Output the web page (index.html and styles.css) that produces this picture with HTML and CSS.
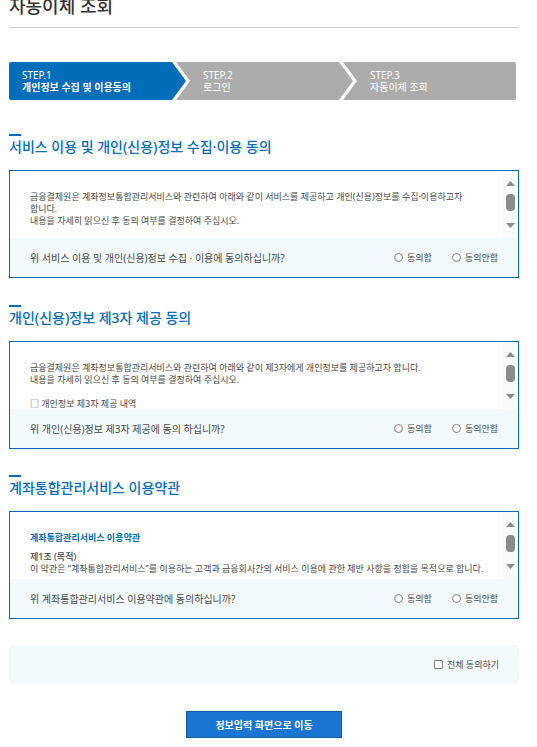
FILE: index.html
```html
<!DOCTYPE html>
<html lang="ko">
<head>
<meta charset="utf-8">
<meta name="viewport" content="width=device-width, initial-scale=1">
<title>자동이체 조회</title>
<link rel="stylesheet" href="styles.css">
</head>
<body>
<svg width="0" height="0" class="defs" aria-hidden="true">
  <symbol id="scrollbar" viewBox="0 0 15 67">
    <rect width="15" height="67" fill="#fbfbfb"/>
    <path d="M7.5 10 12 15H3z" fill="#8b8b8b"/>
    <rect x="3" y="23" width="9" height="17" rx="4" fill="#8b8b8b"/>
    <path d="M7.5 57 12 52H3z" fill="#8b8b8b"/>
  </symbol>
</svg>
<main class="page">
  <h1 class="title">자동이체 조회</h1>
  <ol class="steps">
    <li class="step step-first"><span>STEP.1</span><strong>개인정보 수집 및 이용동의</strong></li>
    <li class="step step-middle"><span>STEP.2</span><span>로그인</span></li>
    <li class="step step-last"><span>STEP.3</span><span>자동이체 조회</span></li>
  </ol>
  <form>
    <section class="section">
      <h2 class="heading">서비스 이용 및 개인(신용)정보 수집·이용 동의</h2>
      <div class="box">
        <div class="viewer">
          <div class="terms">
            <p>금융결제원은 계좌정보통합관리서비스와 관련하여 아래와 같이 서비스를 제공하고 개인(신용)정보를 수집·이용하고자<br>합니다.<br>내용을 자세히 읽으신 후 동의 여부를 결정하여 주십시오.</p>
          </div>
          <svg class="scrollbar" aria-hidden="true"><use href="#scrollbar"/></svg>
        </div>
        <div class="question">
          <p>위 서비스 이용 및 개인(신용)정보 수집 · 이용에 동의하십니까?</p>
          <div class="choices">
            <label class="choice"><input type="radio" name="service">동의함</label>
            <label class="choice"><input type="radio" name="service">동의안함</label>
          </div>
        </div>
      </div>
    </section>
    <section class="section">
      <h2 class="heading">개인(신용)정보 제3자 제공 동의</h2>
      <div class="box">
        <div class="viewer">
          <div class="terms">
            <p>금융결제원은 계좌정보통합관리서비스와 관련하여 아래와 같이 제3자에게 개인정보를 제공하고자 합니다.<br>내용을 자세히 읽으신 후 동의 여부를 결정하여 주십시오.</p>
            <p class="item">□ 개인정보 제3자 제공 내역</p>
          </div>
          <svg class="scrollbar" aria-hidden="true"><use href="#scrollbar"/></svg>
        </div>
        <div class="question">
          <p>위 개인(신용)정보 제3자 제공에 동의 하십니까?</p>
          <div class="choices">
            <label class="choice"><input type="radio" name="third">동의함</label>
            <label class="choice"><input type="radio" name="third">동의안함</label>
          </div>
        </div>
      </div>
    </section>
    <section class="section">
      <h2 class="heading">계좌통합관리서비스 이용약관</h2>
      <div class="box">
        <div class="viewer">
          <div class="terms">
            <h3 class="terms-title">계좌통합관리서비스 이용약관</h3>
            <h4 class="article">제1조 (목적)</h4>
            <p>이 약관은 “계좌통합관리서비스”를 이용하는 고객과 금융회사간의 서비스 이용에 관한 제반 사항을 정함을 목적으로 합니다.</p>
          </div>
          <svg class="scrollbar" aria-hidden="true"><use href="#scrollbar"/></svg>
        </div>
        <div class="question">
          <p>위 계좌통합관리서비스 이용약관에 동의하십니까?</p>
          <div class="choices">
            <label class="choice"><input type="radio" name="account">동의함</label>
            <label class="choice"><input type="radio" name="account">동의안함</label>
          </div>
        </div>
      </div>
    </section>
    <div class="all">
      <label class="choice"><input type="checkbox" name="all">전체 동의하기</label>
    </div>
    <button class="submit" type="button">정보입력 화면으로 이동</button>
  </form>
</main>
</body>
</html>
```
FILE: styles.css
```css
* { box-sizing: border-box; }
body, h1, h2, h3, h4, p, ol { margin: 0; padding: 0; }
body {
  background: #fff;
  color: #484848;
  font-family: "Noto Sans", "Noto Sans CJK KR", sans-serif;
  font-size: 10px;
  line-height: 12px;
  overflow: hidden;
}
.defs { display: none; }
.page { padding: 0 18px 8px 9px; }

.title {
  height: 28px;
  margin-bottom: 34px;
  border-bottom: 1px solid #ccc;
  color: #333;
  font-size: 18px;
  font-weight: 500;
  line-height: 12px;
}

.steps {
  display: grid;
  grid-template-columns: 167fr 167fr 173fr;
  height: 38px;
  margin: 0 3px 34px 0;
  border-radius: 2px;
  overflow: hidden;
  list-style: none;
}
.step {
  display: flex;
  flex-direction: column;
  justify-content: center;
  margin-right: -10px;
  padding-left: 27px;
  background: #acacac;
  color: #fff;
  white-space: nowrap;
}
.step-first {
  padding-left: 13px;
  background: #006eb9;
  clip-path: polygon(0 0, calc(100% - 14px) 0, 100% 50%, calc(100% - 14px) 100%, 0 100%);
}
.step-middle {
  clip-path: polygon(0 0, calc(100% - 14px) 0, 100% 50%, calc(100% - 14px) 100%, 0 100%, 14px 50%);
}
.step-last {
  margin-right: 0;
  clip-path: polygon(0 0, 100% 0, 100% 100%, 0 100%, 14px 50%);
}

.section { margin-bottom: 26px; }
.section:first-child { margin-bottom: 27px; }
.heading {
  margin-bottom: 12px;
  color: #006eb9;
  font-size: 14px;
  font-weight: 500;
  line-height: 22px;
}
.heading::before {
  content: "";
  display: block;
  width: 12px;
  height: 2px;
  background: #006eb9;
}

.box { border: 1px solid #006eb9; }
.viewer { display: flex; height: 67px; }
.terms {
  flex: 1;
  min-width: 0;
  padding: 20px 0 0 20px;
  overflow: hidden;
  font-size: 9px;
  white-space: nowrap;
}
.item { margin-top: 12px; }
.terms-title {
  margin-bottom: 7px;
  color: #006eb9;
  font-size: 9px;
}
.article { font-size: 9px; font-weight: 500; }
.scrollbar { flex: none; width: 15px; height: 67px; }

.question {
  display: flex;
  align-items: center;
  justify-content: space-between;
  height: 39px;
  padding: 0 20px;
  background: #f2fafd;
  white-space: nowrap;
}
.choices { display: flex; gap: 20px; }
.choice { display: flex; align-items: center; gap: 4px; font-size: 9px; }
.choice input {
  appearance: none;
  width: 9px;
  height: 9px;
  margin: 0;
  border: 1px solid #808080;
  border-radius: 1px;
  background: #fff;
}
.choice input[type="radio"] { border-radius: 50%; }

.all {
  display: flex;
  align-items: center;
  justify-content: flex-end;
  height: 39px;
  padding-right: 20px;
  border-radius: 2px;
  background: #f2fafd;
}
.submit {
  display: block;
  margin: 27px auto 0;
  padding: 0 28px;
  height: 27px;
  border: 1px solid #005f9f;
  background: #1976d2;
  color: #fff;
  font: bold 10px/12px "Noto Sans", "Noto Sans CJK KR", sans-serif;
}
```
